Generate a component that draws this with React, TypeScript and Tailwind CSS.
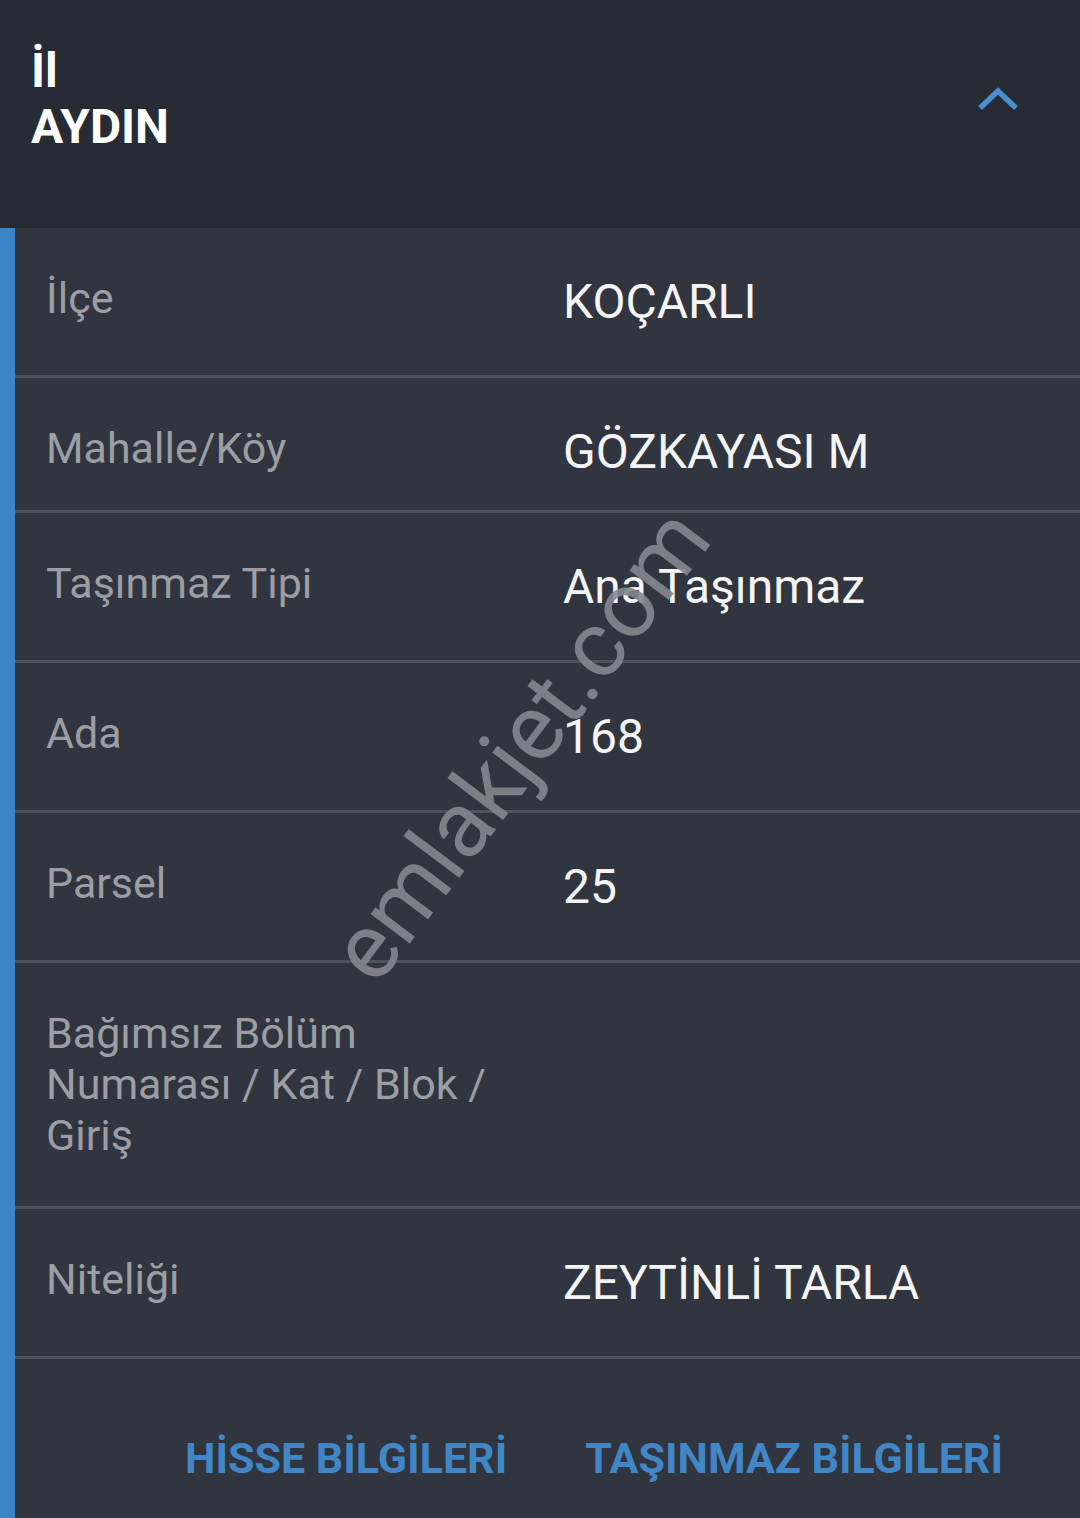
import React from "react";

const rows: { label: string; value: string; h: string }[] = [
  { label: "İlçe", value: "KOÇARLI", h: "h-[147px]" },
  { label: "Mahalle/Köy", value: "GÖZKAYASI M", h: "h-[132px]" },
  { label: "Taşınmaz Tipi", value: "Ana Taşınmaz", h: "h-[147px]" },
  { label: "Ada", value: "168", h: "h-[147px]" },
  { label: "Parsel", value: "25", h: "h-[147px]" },
  { label: "Bağımsız Bölüm Numarası / Kat / Blok / Giriş", value: "", h: "h-[243px]" },
  { label: "Niteliği", value: "ZEYTİNLİ TARLA", h: "h-[147px]" },
];

export default function App() {
  return (
    <div
      className="relative w-[1080px] h-[1518px] overflow-hidden bg-[#31353f]"
      style={{ fontFamily: "Roboto, 'Noto Sans', sans-serif" }}
    >
      <div className="h-[228px] bg-[#272b33] flex items-start justify-between pl-[31px] pr-[62px]">
        <div className="pt-[43px] text-white font-bold text-[48px] leading-[56px]">
          <div>İl</div>
          <div>AYDIN</div>
        </div>
        <svg width="40" height="26" viewBox="0 0 40 26" className="mt-[86px]">
          <path d="M2 22 L20 5 L38 22" fill="none" stroke="#4a8fd0" strokeWidth="5.5" />
        </svg>
      </div>
      <div className="flex flex-col border-l-[15px] border-[#3b86c8] h-[1290px]">
        {rows.map((r, i) => (
          <div key={i} className="flex flex-col">
            <div className={`${r.h} flex items-start`}>
              <div className="w-[548px] pl-[31px] pr-[57px] pt-[45px] text-[#9c9ea3] text-[43px] leading-[51px]">
                {r.label}
              </div>
              <div className="flex-1 pt-[46px] text-[#f4f4f4] text-[48px] leading-[56px]">{r.value}</div>
            </div>
            <div className="h-[3px] bg-[#4d525c]" />
          </div>
        ))}
        <div className="flex-1 flex items-center justify-end gap-[78px] pr-[77px] pt-[40px]">
          <span className="text-[#4186c6] font-bold text-[43px] leading-none">HİSSE BİLGİLERİ</span>
          <span className="text-[#4186c6] font-bold text-[43px] leading-none">TAŞINMAZ BİLGİLERİ</span>
        </div>
      </div>
      <div
        className="absolute left-[520px] top-[745px] text-[#85888e] text-[93px] leading-none whitespace-nowrap opacity-90 pointer-events-none"
        style={{ transform: "translate(-50%, -50%) rotate(-53deg)" }}
      >
        emlakjet.com
      </div>
    </div>
  );
}
